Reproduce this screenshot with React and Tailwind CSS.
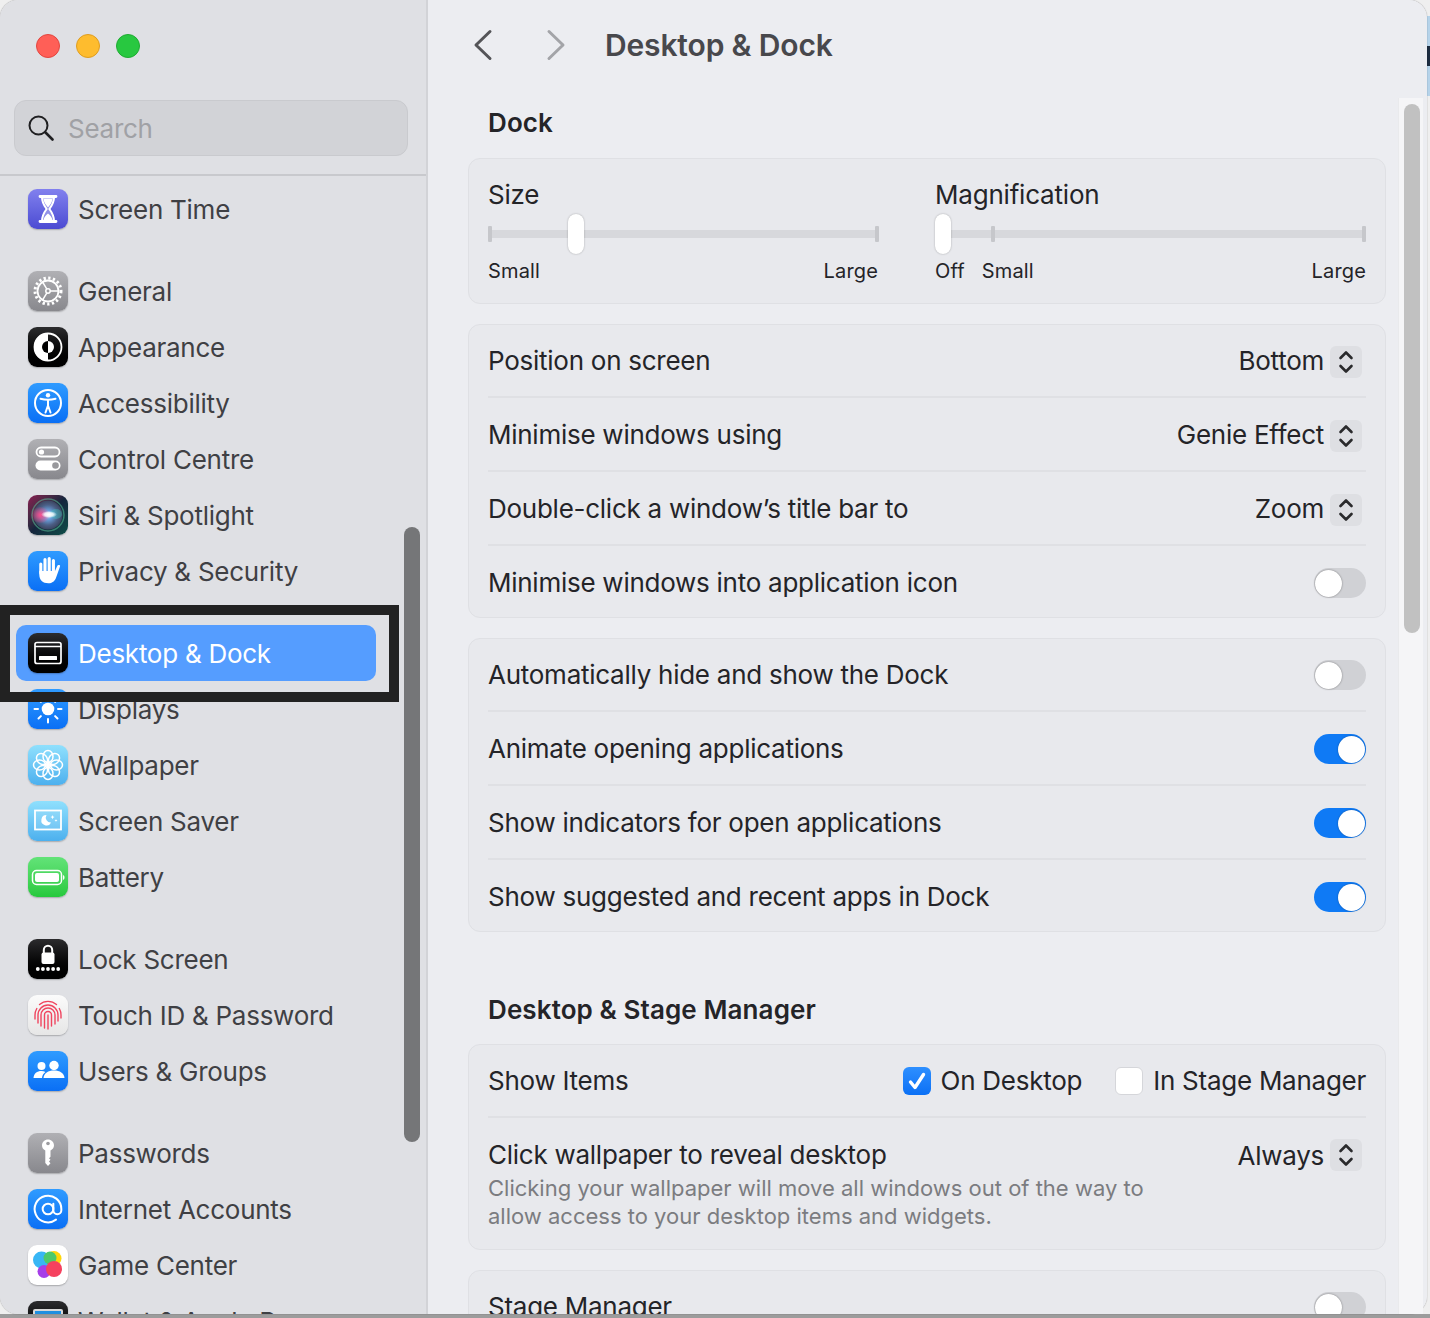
import { AtSign } from "lucide-react"

const tile = "w-10 h-10 rounded-[9px] shrink-0 flex items-center justify-center shadow-[0_1px_1.5px_rgba(0,0,0,0.25)] "
const grayTile = tile + "bg-linear-to-b from-[#b0b0b4] to-[#88888d]"
const blueTile = tile + "bg-linear-to-b from-[#2f9bff] to-[#0a6ff5]"
const skyTile = tile + "bg-linear-to-b from-[#8fe0fd] to-[#4cb0ee]"
const blackTile = tile + "bg-linear-to-b from-[#2c2c2e] to-[#000000]"

function Glyph({ children }) {
  return (
    <svg viewBox="0 0 40 40" className="w-10 h-10" fill="none">
      {children}
    </svg>
  )
}

function ScreenTimeIcon() {
  return (
    <div className={tile + "bg-linear-to-b from-[#8280ee] to-[#4c4ad2]"}>
      <Glyph>
        <path d="M12 7.500h16M12 32.500h16" stroke="#fff" strokeWidth="2.800" strokeLinecap="round" />
        <path d="M14 8.500h12c0 5-2 8-4.600 11.500 2.600 3.500 4.600 6.500 4.600 12H14c0-5.500 2-8.500 4.600-12C16 16.500 14 13.500 14 8.500z" stroke="#fff" strokeWidth="2" fill="#fff" fillOpacity="0.3" />
        <path d="M15.500 10h9c-.5 3.500-2.500 6-4.500 8.500-2-2.500-4-5-4.500-8.500zM15.500 31c.5-3 2.500-5 4.500-6.500 2 1.500 4 3.500 4.500 6.500z" fill="#fff" />
      </Glyph>
    </div>
  )
}

function GeneralIcon() {
  return (
    <div className={grayTile}>
      <Glyph>
        <circle cx="20" cy="20" r="13" stroke="#fff" strokeWidth="3" strokeDasharray="2.300 2.400" />
        <circle cx="20" cy="20" r="10.500" stroke="#fff" strokeWidth="1.800" />
        <circle cx="20" cy="20" r="2.200" stroke="#fff" strokeWidth="1.500" />
        <path d="M22.200 20h8.300M18.900 18.100l-4.700-7.700M18.900 21.900l-4.700 7.700" stroke="#fff" strokeWidth="1.500" />
      </Glyph>
    </div>
  )
}

function AppearanceIcon() {
  return (
    <div className={blackTile}>
      <Glyph>
        <circle cx="20" cy="20" r="13.500" stroke="#fff" strokeWidth="1.800" />
        <path d="M20 6a14 14 0 0 0 0 28z" fill="#fff" />
        <path d="M20 14a6 6 0 0 1 0 12z" fill="#fff" />
        <path d="M20 14a6 6 0 0 0 0 12z" fill="#000" />
      </Glyph>
    </div>
  )
}

function AccessibilityIcon() {
  return (
    <div className={blueTile}>
      <Glyph>
        <circle cx="20" cy="20" r="13" stroke="#fff" strokeWidth="2" />
        <circle cx="20" cy="12.300" r="2.200" fill="#fff" />
        <path d="M12.500 15.800c5 1.400 10 1.400 15 0M20 17v6M20 22.500l-2.500 7M20 22.500l2.500 7" stroke="#fff" strokeWidth="2" strokeLinecap="round" />
      </Glyph>
    </div>
  )
}

function ControlCentreIcon() {
  return (
    <div className={grayTile}>
      <Glyph>
        <rect x="8.500" y="8.500" width="23" height="9" rx="4.500" stroke="#fff" strokeWidth="1.800" />
        <circle cx="13.500" cy="13" r="2.600" fill="#fff" />
        <rect x="7.500" y="21.500" width="25" height="10" rx="5" fill="#fff" />
        <circle cx="27.500" cy="26.500" r="3.300" fill="#98989c" />
      </Glyph>
    </div>
  )
}

function SiriIcon() {
  return (
    <div className={tile + "overflow-hidden bg-linear-to-br from-[#8a1650] via-[#14253c] to-[#0b4f48]"}>
      <Glyph>
        <defs>
          <radialGradient id="siriGlow" cx="50%" cy="50%" r="50%">
            <stop offset="0%" stopColor="#c8e4ff" />
            <stop offset="30%" stopColor="#6aa2de" />
            <stop offset="70%" stopColor="#4b5f86" />
            <stop offset="100%" stopColor="#3c4560" />
          </radialGradient>
          <radialGradient id="siriPink" cx="50%" cy="50%" r="50%">
            <stop offset="0%" stopColor="#ff4d8d" />
            <stop offset="100%" stopColor="#ff4d8d" stopOpacity="0.100" />
          </radialGradient>
          <radialGradient id="siriSpark" cx="50%" cy="50%" r="50%">
            <stop offset="0%" stopColor="#ffffff" />
            <stop offset="55%" stopColor="#ffffff" stopOpacity="0.800" />
            <stop offset="100%" stopColor="#ffffff" stopOpacity="0" />
          </radialGradient>
        </defs>
        <circle cx="20" cy="20" r="16" stroke="#5fc9a0" strokeOpacity="0.500" strokeWidth="1.500" />
        <circle cx="20" cy="20" r="14.500" fill="url(#siriGlow)" />
        <ellipse cx="12.500" cy="20" rx="9" ry="8" fill="url(#siriPink)" />
        <ellipse cx="28" cy="19" rx="6" ry="5" fill="#3bd1c1" fillOpacity="0.350" />
        <ellipse cx="21" cy="19.500" rx="8" ry="3.500" fill="url(#siriSpark)" />
      </Glyph>
    </div>
  )
}

function PrivacyIcon() {
  return (
    <div className={blueTile}>
      <Glyph>
        <path d="M12.800 13v9M17 8.500V20M21.200 7.500V20M25.400 9.500V21" stroke="#fff" strokeWidth="3.100" strokeLinecap="round" />
        <path d="M11.300 20h15.700l2-4.600c.6-1.300 1.800-1.700 2.800-1.100.4.300.4.800.2 1.300L28.300 26c-1.300 4-3.900 6.300-8 6.300-5.500 0-9-3.300-9-8.500z" fill="#fff" />
      </Glyph>
    </div>
  )
}

function DesktopIcon() {
  return (
    <div className={blackTile}>
      <Glyph>
        <rect x="7" y="9.500" width="26" height="21" rx="2" stroke="#fff" strokeWidth="1.700" />
        <path d="M7 13.500h26" stroke="#fff" strokeWidth="1.500" />
        <rect x="11" y="23" width="18" height="4" rx="0.500" fill="#fff" />
      </Glyph>
    </div>
  )
}

function DisplaysIcon() {
  return (
    <div className={blueTile}>
      <Glyph>
        <circle cx="20" cy="20" r="6.300" fill="#fff" />
        <path d="M20 6.500v3.500M20 30v3.500M6.500 20H10M30 20h3.500M10.500 10.500l2.400 2.400M27.100 27.100l2.400 2.400M10.500 29.500l2.400-2.400M27.100 12.900l2.400-2.400" stroke="#fff" strokeWidth="2" strokeLinecap="round" />
      </Glyph>
    </div>
  )
}

function WallpaperIcon() {
  const petals = [0, 45, 90, 135, 180, 225, 270, 315]
  return (
    <div className={skyTile}>
      <Glyph>
        {petals.map((a) => (
          <ellipse key={a} cx="20" cy="11.500" rx="5" ry="6" stroke="#fff" strokeWidth="1.500" transform={`rotate(${a} 20 20)`} />
        ))}
        <circle cx="20" cy="20" r="2.200" fill="#fff" />
      </Glyph>
    </div>
  )
}

function ScreenSaverIcon() {
  return (
    <div className={skyTile}>
      <Glyph>
        <rect x="7" y="9.500" width="26" height="19" stroke="#fff" strokeWidth="1.800" fill="#fff" fillOpacity="0.12" />
        <path d="M18.500 14a5.200 5.200 0 1 0 4.700 7.500 5 5 0 0 1-4.700-7.500z" fill="#fff" />
        <path d="M24.500 14l.6 1.500 1.500.6-1.500.6-.6 1.500-.6-1.500-1.500-.6 1.500-.6zM28 18l.4 1.100 1.100.4-1.100.4-.4 1.100-.4-1.100-1.100-.4 1.100-.4z" fill="#fff" />
      </Glyph>
    </div>
  )
}

function BatteryIcon() {
  return (
    <div className={tile + "bg-linear-to-b from-[#62e378] to-[#25c93c]"}>
      <Glyph>
        <rect x="4.500" y="13.500" width="29" height="14" rx="4" stroke="#fff" strokeWidth="1.500" />
        <rect x="7" y="16" width="24" height="9" rx="2" fill="#fff" />
        <path d="M35 18v5c1-.4 1.500-1.400 1.500-2.500S36 18.400 35 18z" fill="#fff" />
      </Glyph>
    </div>
  )
}

function LockIcon() {
  return (
    <div className={blackTile}>
      <Glyph>
        <path d="M15.800 14v-3a4.200 4.200 0 0 1 8.400 0v3" stroke="#fff" strokeWidth="2" />
        <rect x="13.500" y="13.500" width="13" height="11.500" rx="2" fill="#fff" />
        <circle cx="9.800" cy="30" r="1.900" fill="#fff" />
        <circle cx="14.900" cy="30" r="1.900" fill="#fff" />
        <circle cx="20" cy="30" r="1.900" fill="#fff" />
        <circle cx="25.100" cy="30" r="1.900" fill="#fff" />
        <circle cx="30.200" cy="30" r="1.900" fill="#fff" />
      </Glyph>
    </div>
  )
}

function TouchIdIcon() {
  return (
    <div className={tile + "bg-linear-to-b from-[#fbfbfb] to-[#e6e6e6]"}>
      <Glyph>
        <g stroke="#f0455f" strokeWidth="1.400" strokeLinecap="round">
          <path d="M11.500 9.500a13 13 0 0 1 17 0" />
          <path d="M7 24v-4a13 13 0 0 1 1.800-6.500M31.300 13.500A13 13 0 0 1 33 20v3" />
          <path d="M10 28v-8a10 10 0 0 1 20 0v6" />
          <path d="M13 31v-11a7 7 0 0 1 14 0v9" />
          <path d="M16.500 33v-13a3.500 3.500 0 0 1 7 0v11" />
          <path d="M20 34V20" />
        </g>
      </Glyph>
    </div>
  )
}

function UsersIcon() {
  return (
    <div className={blueTile}>
      <Glyph>
        <circle cx="13.500" cy="15" r="4" fill="#fff" />
        <circle cx="26" cy="14.500" r="4.700" fill="#fff" />
        <path d="M5.500 27c.3-4.500 3.500-7 8-7 1.500 0 2.800.3 3.900.9-2 1.400-3.200 3.500-3.400 6.100z" fill="#fff" />
        <path d="M15.500 27c.4-5 4.600-7.500 10.500-7.500S36.100 22 36.500 27z" fill="#fff" />
      </Glyph>
    </div>
  )
}

function PasswordsIcon() {
  return (
    <div className={grayTile}>
      <Glyph>
        <path d="M20 6.500c-3.300 0-6 2.600-6 5.800 0 2.300 1.300 4.300 3.300 5.200V30l2.700 3 2.500-2.800-1.500-1.800 1.500-1.600-1.500-1.500 1.500-1.500v-6.300c2-.9 3.500-2.900 3.500-5.200 0-3.200-2.700-5.800-6-5.800z" fill="#fff" />
        <circle cx="20" cy="10.500" r="1.800" fill="#9b9b9f" />
      </Glyph>
    </div>
  )
}

function InternetIcon() {
  return (
    <div className={blueTile}>
      <AtSign className="w-[32px] h-[32px] text-white" strokeWidth={1.500} />
    </div>
  )
}

function GameCenterIcon() {
  return (
    <div className={tile + "bg-white overflow-hidden"}>
      <Glyph>
        <circle cx="26" cy="13.500" r="7.500" fill="#ffd60a" />
        <circle cx="13.500" cy="15" r="8.500" fill="#38b6f5" />
        <circle cx="16" cy="26.500" r="6.500" fill="#a63ee8" />
        <circle cx="22" cy="13" r="6.500" fill="#4cc96b" />
        <circle cx="26" cy="24" r="8" fill="#f5415e" />
      </Glyph>
    </div>
  )
}

function WalletIcon() {
  return (
    <div className={blackTile}>
      <Glyph>
        <rect x="5" y="8" width="30" height="24" rx="2" fill="#d8d8d8" />
        <rect x="7" y="10" width="26" height="8" fill="#1f8fe0" />
      </Glyph>
    </div>
  )
}

const groups = [
  [{ label: "Screen Time", Icon: ScreenTimeIcon }],
  [
    { label: "General", Icon: GeneralIcon },
    { label: "Appearance", Icon: AppearanceIcon },
    { label: "Accessibility", Icon: AccessibilityIcon },
    { label: "Control Centre", Icon: ControlCentreIcon },
    { label: "Siri & Spotlight", Icon: SiriIcon },
    { label: "Privacy & Security", Icon: PrivacyIcon },
  ],
  [
    { label: "Desktop & Dock", Icon: DesktopIcon, active: true },
    { label: "Displays", Icon: DisplaysIcon },
    { label: "Wallpaper", Icon: WallpaperIcon },
    { label: "Screen Saver", Icon: ScreenSaverIcon },
    { label: "Battery", Icon: BatteryIcon },
  ],
  [
    { label: "Lock Screen", Icon: LockIcon },
    { label: "Touch ID & Password", Icon: TouchIdIcon },
    { label: "Users & Groups", Icon: UsersIcon },
  ],
  [
    { label: "Passwords", Icon: PasswordsIcon },
    { label: "Internet Accounts", Icon: InternetIcon },
    { label: "Game Center", Icon: GameCenterIcon },
    { label: "Wallet & Apple Pay", Icon: WalletIcon },
  ],
]

function SidebarRow({ label, Icon, active }) {
  return (
    <div className={"h-14 w-[360px] ml-4 pl-3 flex items-center gap-[10px] rounded-[10px] text-[26px] tracking-[-0.26px] " + (active ? "bg-[#559dff] text-white" : "text-[#3f4044]")}>
      <Icon />
      <span className="whitespace-nowrap">{label}</span>
    </div>
  )
}

function Sidebar() {
  return (
    <aside className="w-[428px] shrink-0 h-full bg-[#dfe0e4] border-r-2 border-[#d2d3d7] flex flex-col overflow-hidden">
      <div className="h-[92px] shrink-0 pl-9 flex items-center gap-4">
        <span className="w-6 h-6 rounded-full bg-[#ff5f57] border border-[#e2463f]" />
        <span className="w-6 h-6 rounded-full bg-[#febc2e] border border-[#df9d20]" />
        <span className="w-6 h-6 rounded-full bg-[#28c840] border border-[#1fab32]" />
      </div>
      <div className="ml-[14px] mr-[18px] mt-2 h-14 shrink-0 rounded-[12px] bg-[#d2d3d7] border border-[#c9cace] flex items-center pl-[13px] gap-[14px]">
        <svg viewBox="0 0 26 26" className="w-[26px] h-[26px]" fill="none" stroke="#1f1f21" strokeLinecap="round">
          <circle cx="10.500" cy="10.500" r="9" strokeWidth="2" />
          <path d="M17.500 17.500 24.500 24.500" strokeWidth="2.600" />
        </svg>
        <span className="text-[26px] tracking-[-0.26px] text-[#a0a1a5]">Search</span>
      </div>
      <div className="mt-[18px] h-[2px] shrink-0 bg-[#c8c9cd]" />
      <div className="pt-[5px] shrink-0 flex flex-col gap-[26px]">
        {groups.map((group, i) => (
          <div key={i}>
            {group.map((item) => (
              <SidebarRow key={item.label} {...item} />
            ))}
          </div>
        ))}
      </div>
    </aside>
  )
}

function Card({ children, className = "" }) {
  return <div className={"w-[918px] shrink-0 rounded-[12px] bg-[#e8e9ed] border border-[#dfe0e4] px-[19px] " + className}>{children}</div>
}

function Toggle({ on }) {
  if (on) {
    return (
      <span className="w-[52px] h-[30px] mb-[2px] rounded-full bg-[#0f7af5] flex items-center justify-end pr-[1px] shrink-0">
        <span className="w-[27px] h-[27px] rounded-full bg-white shadow-[0_0_2px_rgba(0,0,0,0.35)]" />
      </span>
    )
  }
  return (
    <span className="w-[52px] h-[30px] mb-[2px] rounded-full bg-[#d0d1d5] flex items-center pl-[1px] shrink-0">
      <span className="w-[27px] h-[27px] rounded-full bg-white shadow-[0_0_2px_rgba(0,0,0,0.45)]" />
    </span>
  )
}

function Stepper() {
  return (
    <span className="w-8 h-8 rounded-[6px] bg-[#dedfe3] flex items-center justify-center ml-[6px] mr-1 shrink-0">
      <svg viewBox="0 0 32 32" className="w-8 h-8" fill="none" stroke="#2a2a2c" strokeWidth="2.600" strokeLinecap="round" strokeLinejoin="round">
        <path d="M10.500 12l5.500-5.500 5.500 5.500M10.500 20l5.500 5.500 5.500-5.500" />
      </svg>
    </span>
  )
}

function Row({ label, last, children }) {
  return (
    <div className={"h-[74px] flex items-center justify-between " + (last ? "pt-[2px]" : "pt-1 border-b-2 border-[#dfe0e4]")}>
      <span className="whitespace-nowrap mb-1">{label}</span>
      {children}
    </div>
  )
}

function SelectRow({ label, value }) {
  return (
    <Row label={label}>
      <span className="flex items-center">
        <span className="mb-1">{value}</span>
        <Stepper />
      </span>
    </Row>
  )
}

function Slider({ width, thumb, ticks, children }) {
  return (
    <div className={"flex flex-col " + width}>
      <div className="relative h-10 mt-[1px]">
        <div className="absolute left-0 right-0 top-4 h-2 bg-[#d7d8dc]" />
        {ticks.map((tick) => (
          <div key={tick} className={"absolute top-3 w-1 h-4 rounded-[1px] bg-[#c6c7cb] " + tick} />
        ))}
        <div className={"absolute top-0 w-4 h-10 rounded-full bg-white shadow-[0_0_2px_rgba(0,0,0,0.3)] " + thumb} />
      </div>
      <div className="h-[24px] mt-[5px] text-[20px] leading-[24px] tracking-[0.15px] flex justify-between">{children}</div>
    </div>
  )
}

function Main() {
  return (
    <main className="flex-1 min-w-0 h-full bg-[#ecedf1] overflow-hidden text-[#242428] text-[26px] tracking-[-0.26px]">
      <div className="h-[90px] flex items-center pl-[45px]">
        <svg viewBox="0 0 20 32" className="w-5 h-8" fill="none" stroke="#545458" strokeWidth="3" strokeLinecap="round" strokeLinejoin="round">
          <path d="M17 2.500 3 16l14 13.500" />
        </svg>
        <svg viewBox="0 0 20 32" className="w-5 h-8 ml-[53px]" fill="none" stroke="#a3a4a8" strokeWidth="3" strokeLinecap="round" strokeLinejoin="round">
          <path d="M3 2.500 17 16 3 29.500" />
        </svg>
        <h1 className="ml-[39px] text-[30px] font-semibold text-[#48484c] tracking-[-0.15px]">Desktop &amp; Dock</h1>
      </div>
      <div className="pl-10 flex flex-col">
        <h2 className="h-[64px] mb-1 pl-5 flex items-center text-[26px] tracking-[0.1px] font-semibold text-[#242428]">Dock</h2>

        <Card className="h-[146px] pt-[18px] flex gap-[57px]">
          <div>
            <div className="leading-[36px] tracking-[-0.2px]">Size</div>
            <Slider
              width="w-[390px]"
              thumb="left-[80px]"
              ticks={["left-0", "left-[387px]"]}
            >
              <span>Small</span>
              <span>Large</span>
            </Slider>
          </div>
          <div>
            <div className="leading-[36px] tracking-[-0.2px]">Magnification</div>
            <Slider
              width="w-[431px]"
              thumb="left-0"
              ticks={["left-[56px]", "left-[427px]"]}
            >
              <span className="flex gap-[17px]">
                <span>Off</span>
                <span>Small</span>
              </span>
              <span>Large</span>
            </Slider>
          </div>
        </Card>

        <Card className="mt-5 h-[294px] [&>*:first-child]:-mt-px">
          <SelectRow label="Position on screen" value="Bottom" />
          <SelectRow label="Minimise windows using" value="Genie Effect" />
          <SelectRow label="Double-click a window’s title bar to" value="Zoom" />
          <Row label="Minimise windows into application icon" last>
            <Toggle />
          </Row>
        </Card>

        <Card className="mt-5 h-[294px] [&>*:first-child]:-mt-px">
          <Row label="Automatically hide and show the Dock">
            <Toggle />
          </Row>
          <Row label="Animate opening applications">
            <Toggle on />
          </Row>
          <Row label="Show indicators for open applications">
            <Toggle on />
          </Row>
          <Row label="Show suggested and recent apps in Dock" last>
            <Toggle on />
          </Row>
        </Card>

        <h2 className="mt-[60px] mb-[18px] h-[34px] pl-5 flex items-center text-[26px] tracking-[0.1px] font-semibold text-[#242428]">Desktop &amp; Stage Manager</h2>

        <Card className="h-[206px] [&>*:first-child]:-mt-px">
          <Row label="Show Items">
            <span className="flex items-center">
              <span className="w-7 h-7 rounded-[6px] bg-linear-to-b from-[#2d8fff] to-[#0a70f5] flex items-center justify-center mr-[10px] mb-[2px]">
                <svg viewBox="0 0 28 28" className="w-7 h-7" fill="none" stroke="#fff" strokeWidth="3.400" strokeLinecap="round" strokeLinejoin="round">
                  <path d="M7.500 15l4.500 5.500L20.500 7.500" />
                </svg>
              </span>
              <span className="mb-1">On Desktop</span>
              <span className="w-7 h-7 rounded-[6px] bg-white border border-[#d5d6da] ml-[33px] mr-[10px] mb-[2px]" />
              <span className="mb-1">In Stage Manager</span>
            </span>
          </Row>
          <div className="pt-[19px] flex justify-between">
            <div>
              <div className="leading-[36px]">Click wallpaper to reveal desktop</div>
              <p className="w-[670px] mt-[1px] text-[22px] leading-[28px] text-[#7b7c80] tracking-normal">
                Clicking your wallpaper will move all windows out of the way to allow access to your desktop items and widgets.
              </p>
            </div>
            <span className="flex items-center h-9">
              Always
              <Stepper />
            </span>
          </div>
        </Card>

        <Card className="mt-5 h-[100px] [&>*:first-child]:-mt-px">
          <Row label="Stage Manager" last>
            <Toggle />
          </Row>
        </Card>
      </div>
    </main>
  )
}

export default function App() {
  return (
    <div className="relative w-[1430px] h-[1318px] overflow-hidden bg-[#efefef] font-['Inter',sans-serif]">
      <div className="absolute right-0 top-[16px] w-[3px] h-[80px] bg-[#b5d3ea]" />
      <div className="absolute right-0 top-[46px] w-[3px] h-[20px] bg-[#1c2c40]" />
      <div className="absolute left-0 right-0 bottom-0 h-1 bg-[#9c9c9c]" />
      <div className="relative w-[1427px] h-[1314px] rounded-[18px] overflow-hidden flex shadow-[0_0_1px_rgba(0,0,0,0.6)]">
        <Sidebar />
        <Main />
      </div>
      <div className="absolute left-[404px] top-[527px] w-4 h-[615px] rounded-full bg-[#757678]" />
      <div className="absolute left-[1398px] top-[98px] w-[25px] h-[1216px] bg-[#f5f5f7] border-l border-[#e9eaec]" />
      <div className="absolute left-[1404px] top-[104px] w-4 h-[529px] rounded-full bg-[#c1c1c1]" />
      <div className="absolute left-0 top-[605px] w-[399px] h-[97px] border-[10px] border-[#222222]" />
    </div>
  )
}
